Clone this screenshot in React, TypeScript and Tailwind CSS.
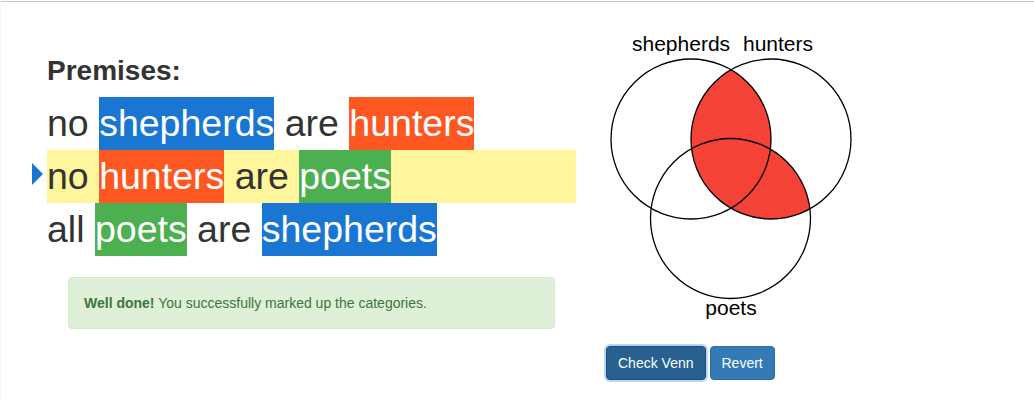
import React from "react";

const blue = "inline-block bg-[#1976d2] text-white";
const orange = "inline-block bg-[#ff5722] text-white";
const green = "inline-block bg-[#4caf50] text-white";

function Venn() {
  return (
    <svg width="280" height="310" viewBox="0 0 280 310" className="block">
      <defs>
        <clipPath id="sp">
          <circle cx="101" cy="119" r="80" />
          <circle cx="140.5" cy="198.5" r="80" />
        </clipPath>
      </defs>
      <circle cx="181" cy="119" r="80" fill="#f44336" clipPath="url(#sp)" />
      <g fill="none" stroke="#000" strokeWidth="1.3">
        <circle cx="101" cy="119" r="80" />
        <circle cx="181" cy="119" r="80" />
        <circle cx="140.5" cy="198.5" r="80" />
      </g>
      <g fontFamily="'Liberation Sans', Arial, sans-serif" fontSize="21" fill="#000">
        <text x="42" y="31">shepherds</text>
        <text x="153" y="31">hunters</text>
        <text x="141" y="295" textAnchor="middle">poets</text>
      </g>
    </svg>
  );
}

export default function App() {
  return (
    <div className="min-h-[401px] bg-white border-l border-[#f4f4f4] font-['Liberation_Sans',Arial,sans-serif] text-[#333]">
      <div className="h-px mt-px bg-[#c8c8c8]" />
      <div className="flex">
        <div className="w-[589px] pl-[46px] pt-[54px]">
          <h3 className="text-[28px] leading-[1.1] font-bold mb-[10px]">Premises:</h3>
          <div className="w-[529px] text-[37.5px] leading-[53px]">
            <div>
              no <span className={blue}>shepherds</span> are <span className={orange}>hunters</span>
            </div>
            <div className="relative bg-[#fff59d]">
              <span className="absolute left-[-15px] top-[13px] w-0 h-0 border-y-[11px] border-y-transparent border-l-[11px] border-l-[#1976d2]" />
              no <span className={orange}>hunters</span> are <span className={green}>poets</span>
            </div>
            <div>
              all <span className={green}>poets</span> are <span className={blue}>shepherds</span>
            </div>
          </div>
          <div className="ml-[21px] mt-[21px] w-[487px] p-[15px] border border-[#d6e9c6] bg-[#dff0d8] rounded-[4px] text-[#3c763d] text-[14px] leading-[20px]">
            <strong>Well done!</strong> You successfully marked up the categories.
          </div>
        </div>
        <div className="pt-[18px]">
          <Venn />
          <div className="mt-[16px] ml-[16px] flex gap-[4px] text-[14px] leading-[20px] text-white">
            <button className="px-[11px] py-[6px] bg-[#286090] border border-[#204d74] rounded-[4px] shadow-[0_0_0_2px_rgba(80,150,240,0.4)]">
              Check Venn
            </button>
            <button className="px-[11px] py-[6px] bg-[#337ab7] border border-[#2e6da4] rounded-[4px]">
              Revert
            </button>
          </div>
        </div>
      </div>
    </div>
  );
}
